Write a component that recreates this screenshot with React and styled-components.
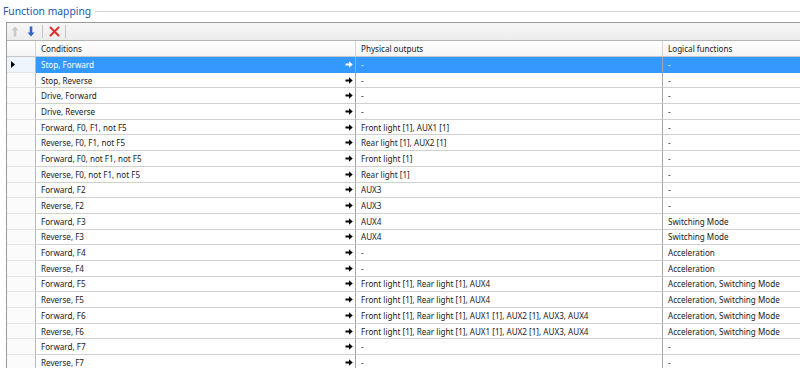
import React from 'react'
import styled, { createGlobalStyle } from 'styled-components'

const GlobalStyle = createGlobalStyle`
  html, body {
    margin: 0;
    padding: 0;
    background: #ffffff;
    overflow: hidden;
  }
  body {
    font-family: "Noto Sans", "Open Sans", sans-serif;
  }
`

const rows = [
  ['Stop, Forward', '-', '-'],
  ['Stop, Reverse', '-', '-'],
  ['Drive, Forward', '-', '-'],
  ['Drive, Reverse', '-', '-'],
  ['Forward, F0, F1, not F5', 'Front light [1], AUX1 [1]', '-'],
  ['Reverse, F0, F1, not F5', 'Rear light [1], AUX2 [1]', '-'],
  ['Forward, F0, not F1, not F5', 'Front light [1]', '-'],
  ['Reverse, F0, not F1, not F5', 'Rear light [1]', '-'],
  ['Forward, F2', 'AUX3', '-'],
  ['Reverse, F2', 'AUX3', '-'],
  ['Forward, F3', 'AUX4', 'Switching Mode'],
  ['Reverse, F3', 'AUX4', 'Switching Mode'],
  ['Forward, F4', '-', 'Acceleration'],
  ['Reverse, F4', '-', 'Acceleration'],
  ['Forward, F5', 'Front light [1], Rear light [1], AUX4', 'Acceleration, Switching Mode'],
  ['Reverse, F5', 'Front light [1], Rear light [1], AUX4', 'Acceleration, Switching Mode'],
  ['Forward, F6', 'Front light [1], Rear light [1], AUX1 [1], AUX2 [1], AUX3, AUX4', 'Acceleration, Switching Mode'],
  ['Reverse, F6', 'Front light [1], Rear light [1], AUX1 [1], AUX2 [1], AUX3, AUX4', 'Acceleration, Switching Mode'],
  ['Forward, F7', '-', '-'],
  ['Reverse, F7', '-', '-'],
]

const Page = styled.div`
  width: 800px;
  height: 368px;
  overflow: hidden;
`

const GroupTitle = styled.div`
  display: flex;
  align-items: center;
  height: 22px;
  padding-left: 3px;
  font-size: 10.3px;
  color: #1d58a6;

  &::after {
    content: '';
    flex: 1;
    height: 1px;
    margin-left: 4px;
    background: #d6d6d6;
  }
`

const Grid = styled.div`
  margin-left: 6px;
  border-left: 1px solid #9a9a9a;
  border-top: 1px solid #9a9a9a;
`

const Toolbar = styled.div`
  display: flex;
  align-items: center;
  height: 17px;
  padding-left: 2px;
  gap: 4px;
  background: linear-gradient(#f7f7f7, #ececec);
  border-bottom: 1px solid #b4b4b4;
`

const ToolButton = styled.span`
  display: flex;
  align-items: center;
  justify-content: center;
  width: 12px;
  height: 14px;
`

const Separator = styled.span`
  width: 1px;
  height: 13px;
  margin: 0 1px;
  background: #c4c4c4;
`

const Table = styled.div`
  display: grid;
  grid-template-columns: 29px 307px 13px 307px 1fr;
  font-size: 8.1px;
  color: #1a1a1a;
`

const HeadCell = styled.div`
  height: 15px;
  display: flex;
  align-items: center;
  padding-left: ${p => (p.$pad ? '5px' : '0')};
  background: linear-gradient(#ffffff, #f4f4f4);
  border-bottom: 1px solid #c8c8c8;
  border-right: ${p => (p.$sep ? '1px solid #d5d5d5' : 'none')};
  grid-column: ${p => p.$span || 'auto'};
  white-space: nowrap;
`

const RowHead = styled.div`
  height: 14.7px;
  display: flex;
  align-items: center;
  padding-left: 4px;
  background: ${p => (p.$active ? '#eef5fc' : '#fbfbfb')};
  border-bottom: 1px solid #e4e4e4;
  border-right: 1px solid #b8b8b8;
`

const Cell = styled.div`
  height: 14.7px;
  display: flex;
  align-items: center;
  padding-left: ${p => (p.$pad ? '5px' : '0')};
  justify-content: ${p => (p.$center ? 'center' : 'flex-start')};
  background: ${p => (p.$selected ? '#3399ff' : '#ffffff')};
  color: ${p => (p.$selected ? '#ffffff' : '#1a1a1a')};
  border-bottom: 1px solid ${p => (p.$selected ? '#3399ff' : '#d0d0d0')};
  border-right: ${p => (p.$sep ? '1px solid #a8a8a8' : 'none')};
  white-space: nowrap;
  overflow: hidden;
`

const ArrowUp = () => (
  <svg width="8" height="11" viewBox="0 0 8 11">
    <path d="M4 0.5 L7.5 4.5 H5.3 V10.5 H2.7 V4.5 H0.5 Z" fill="#c5cbd3" />
  </svg>
)

const ArrowDown = () => (
  <svg width="8" height="11" viewBox="0 0 8 11">
    <path d="M4 10.5 L7.5 6.5 H5.3 V0.5 H2.7 V6.5 H0.5 Z" fill="#2f67c9" />
  </svg>
)

const DeleteIcon = () => (
  <svg width="11" height="11" viewBox="0 0 11 11">
    <path d="M1.5 1.5 L9.5 9.5 M9.5 1.5 L1.5 9.5" stroke="#d9302c" strokeWidth="2" strokeLinecap="round" />
  </svg>
)

const MapArrow = ({ color }) => (
  <svg width="8" height="7" viewBox="0 0 8 7">
    <path d="M0.5 2.5 H4 V0.3 L7.7 3.5 L4 6.7 V4.5 H0.5 Z" fill={color} />
  </svg>
)

const Pointer = () => (
  <svg width="4" height="7" viewBox="0 0 4 7">
    <path d="M0 0 L4 3.5 L0 7 Z" fill="#000000" />
  </svg>
)

export default function App() {
  return (
    <Page>
      <GlobalStyle />
      <GroupTitle>Function mapping</GroupTitle>
      <Grid>
        <Toolbar>
          <ToolButton><ArrowUp /></ToolButton>
          <ToolButton><ArrowDown /></ToolButton>
          <Separator />
          <ToolButton><DeleteIcon /></ToolButton>
          <Separator />
        </Toolbar>
        <Table>
          <HeadCell $sep />
          <HeadCell $pad $sep $span="span 2">Conditions</HeadCell>
          <HeadCell $pad $sep>Physical outputs</HeadCell>
          <HeadCell $pad>Logical functions</HeadCell>
          {rows.map((r, i) => {
            const sel = i === 0
            return (
              <React.Fragment key={i}>
                <RowHead $active={sel}>{sel && <Pointer />}</RowHead>
                <Cell $pad $selected={sel}>{r[0]}</Cell>
                <Cell $center $sep $selected={sel}>
                  <MapArrow color={sel ? '#ffffff' : '#000000'} />
                </Cell>
                <Cell $pad $sep $selected={sel}>{r[1]}</Cell>
                <Cell $pad $selected={sel}>{r[2]}</Cell>
              </React.Fragment>
            )
          })}
        </Table>
      </Grid>
    </Page>
  )
}
